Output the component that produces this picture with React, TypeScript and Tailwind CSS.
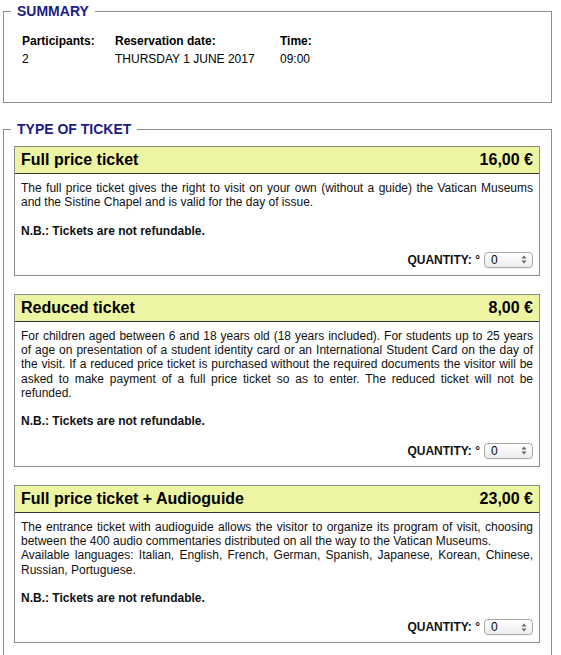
import React from "react"

type Ticket = {
    title: string
    price: string
    text: React.ReactNode
}

const tickets: Ticket[] = [
    {
        title: "Full price ticket",
        price: "16,00 €",
        text: "The full price ticket gives the right to visit on your own (without a guide) the Vatican Museums and the Sistine Chapel and is valid for the day of issue.",
    },
    {
        title: "Reduced ticket",
        price: "8,00 €",
        text: "For children aged between 6 and 18 years old (18 years included). For students up to 25 years of age on presentation of a student identity card or an International Student Card on the day of the visit. If a reduced price ticket is purchased without the required documents the visitor will be asked to make payment of a full price ticket so as to enter. The reduced ticket will not be refunded.",
    },
    {
        title: "Full price ticket + Audioguide",
        price: "23,00 €",
        text: (
            <>
                The entrance ticket with audioguide allows the visitor to organize its program of visit, choosing between the 400 audio commentaries distributed on all the way to the Vatican Museums.
                <br />
                Available languages: Italian, English, French, German, Spanish, Japanese, Korean, Chinese, Russian, Portuguese.
            </>
        ),
    },
]

const QtySelect = () => (
    <div className="flex items-center justify-between w-[49px] h-[16px] border border-[#a9a9a9] rounded-[4px] bg-gradient-to-b from-white to-[#ededed] pl-[6px] pr-[5px] shadow-[0_1px_0_rgba(0,0,0,0.05)]">
        <span className="text-[12px] leading-none text-black">0</span>
        <svg width="6" height="9" viewBox="0 0 6 9">
            <path d="M3 0.5 L5.5 3.5 H0.5 Z" fill="#666" />
            <path d="M3 8.5 L5.5 5.5 H0.5 Z" fill="#666" />
        </svg>
    </div>
)

const TicketCard = ({ title, price, text }: Ticket) => (
    <div className="border border-[#8c8c8c] bg-white">
        <div className="flex items-center justify-between h-[27px] px-[6px] bg-[#eef5a2] border-b border-[#333]">
            <span className="text-[16px] font-bold text-black">{title}</span>
            <span className="text-[16px] font-bold text-black">{price}</span>
        </div>
        <div className="px-[6px] pt-[7px] pb-[7px] text-[12px] leading-[14.3px] text-[#111]">
            <p className="text-justify mb-[14px]">{text}</p>
            <p className="font-bold mb-[14px]">N.B.: Tickets are not refundable.</p>
            <div className="flex items-center justify-end gap-[4px]">
                <span className="font-bold">QUANTITY: °</span>
                <QtySelect />
            </div>
        </div>
    </div>
)

export default function App() {
    return (
        <div className="w-[561px] min-h-[655px] bg-white pt-[3px] font-['Liberation_Sans',Arial,sans-serif] text-black">
            <fieldset className="ml-[3px] w-[549px] border border-[#8c8c8c] pl-[10px] pr-[11px] pb-[36px]">
                <legend className="ml-[-3px] px-[6px] text-[14px] leading-[16px] font-bold text-[#1c1c87]">SUMMARY</legend>
                <div className="flex pl-2 pt-[15px] text-[12px] leading-[14px]">
                    <div className="w-[93px] flex flex-col gap-[4px]">
                        <span className="font-bold">Participants:</span>
                        <span>2</span>
                    </div>
                    <div className="w-[165px] flex flex-col gap-[4px]">
                        <span className="font-bold">Reservation date:</span>
                        <span>THURSDAY 1 JUNE 2017</span>
                    </div>
                    <div className="flex flex-col gap-[4px]">
                        <span className="font-bold">Time:</span>
                        <span>09:00</span>
                    </div>
                </div>
            </fieldset>
            <fieldset className="ml-[3px] mt-[18px] w-[549px] border border-[#8c8c8c] pl-[10px] pr-[11px] pb-[18px]">
                <legend className="ml-[-3px] px-[6px] text-[14px] leading-[16px] font-bold text-[#1c1c87]">TYPE OF TICKET</legend>
                <div className="flex flex-col gap-[18px] pt-[9px]">
                    {tickets.map((t) => (
                        <TicketCard key={t.title} {...t} />
                    ))}
                </div>
            </fieldset>
        </div>
    )
}
